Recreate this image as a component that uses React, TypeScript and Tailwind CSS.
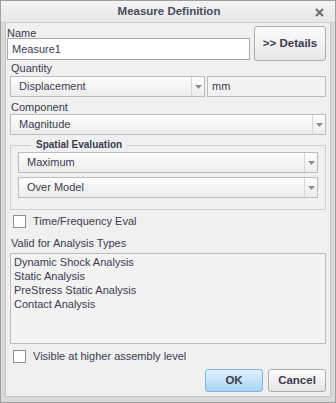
import React from 'react'

const txt = 'text-[#3b3b52]'

function Arrow() {
  return (
    <svg width="7" height="4" viewBox="0 0 7 4">
      <path d="M0 0 H7 L3.5 4 Z" fill="#8c8c8c" />
    </svg>
  )
}

function Dropdown({ value, className = '' }: { value: string; className?: string }) {
  return (
    <div
      className={`flex h-[21px] border border-[#bcbcbc] bg-linear-to-b from-[#fefefe] to-[#ececec] ${className}`}
    >
      <div className={`flex-1 flex items-center pl-[8px] text-[11px] ${txt}`}>{value}</div>
      <div className="w-[13px] border-l border-[#d6d6d6] flex items-center justify-center">
        <Arrow />
      </div>
    </div>
  )
}

function CheckRow({ label, className = '' }: { label: string; className?: string }) {
  return (
    <div className={`flex items-center ${className}`}>
      <div className="w-[13px] h-[13px] border border-[#8f8f8f] bg-white ml-[7px]" />
      <span className={`ml-[7px] text-[11px] ${txt}`}>{label}</span>
    </div>
  )
}

export default function App() {
  return (
    <div className="w-[336px] h-[403px] border border-[#9f9f9f] bg-[#d9d9d9] flex flex-col font-['Liberation_Sans',Arial,sans-serif] leading-[13px]">
      {/* title bar */}
      <div className="h-[22px] flex items-center bg-linear-to-b from-[#f5f5f5] to-[#e6e6e6] border-b border-[#cfcfcf] relative">
        <div className="flex-1 text-center text-[11.5px] font-bold text-[#4a4a5e] pl-[2px]">Measure Definition</div>
        <svg className="absolute right-[11px] top-[7px]" width="9" height="9" viewBox="0 0 9 9">
          <path d="M1 1 L8 8 M8 1 L1 8" stroke="#707070" strokeWidth="2.2" />
        </svg>
      </div>

      {/* body */}
      <div className="flex-1 mx-[4px] mb-[5px] bg-[#f0f0f0] border-l border-r border-b border-[#c4c4c4] pr-[4px]">
        {/* name row */}
        <div className="flex items-start pt-[3px]">
          <div className="flex flex-col ml-px">
            <div className={`h-[12px] text-[11px] leading-[14px] ${txt}`}>Name</div>
            <div className={`w-[243px] h-[22px] border border-[#aaaaaa] bg-white flex items-center pl-[4px] text-[11px] ${txt}`}>
              Measure1
            </div>
          </div>
          <button className="ml-[4px] w-[72px] h-[35px] rounded-[3px] border border-[#adadad] bg-linear-to-b from-[#fbfbfb] to-[#e8e8e8] text-[11.5px] font-bold text-[#3b3b52]">
            &gt;&gt; Details
          </button>
        </div>

        {/* quantity */}
        <div className={`ml-[5px] h-[13px] text-[11px] leading-[15px] ${txt}`}>Quantity</div>
        <div className="flex ml-[4px] mt-[2px]">
          <Dropdown value="Displacement" className="w-[195px]" />
          <div className={`ml-[2px] flex-1 h-[21px] border border-[#bcbcbc] bg-[#f3f3f3] flex items-center pl-[4px] text-[11px] ${txt}`}>
            mm
          </div>
        </div>

        {/* component */}
        <div className={`ml-[5px] mt-[3px] h-[13px] text-[11px] leading-[14px] ${txt}`}>Component</div>
        <Dropdown value="Magnitude" className="ml-[4px] mt-px" />

        {/* spatial evaluation */}
        <fieldset className="ml-[4px] mt-[4px] border border-[#cfcfcf] px-[7px] pb-[11px]">
          <legend className="ml-[13px] px-[5px] text-[10px] font-bold text-[#3b3b52] leading-[12px]">Spatial Evaluation</legend>
          <Dropdown value="Maximum" className="mt-px h-[20px]" />
          <Dropdown value="Over Model" className="mt-[4px] h-[20px]" />
        </fieldset>

        <CheckRow label="Time/Frequency Eval" className="mt-[5px]" />

        <div className={`ml-[5px] mt-[9px] h-[13px] text-[11px] ${txt}`}>Valid for Analysis Types</div>
        <div className={`ml-[4px] mt-[3px] h-[91px] border border-[#bcbcbc] bg-[#f3f3f3] pl-[3px] pt-px text-[11px] leading-[14px] ${txt}`}>
          <div>Dynamic Shock Analysis</div>
          <div>Static Analysis</div>
          <div>PreStress Static Analysis</div>
          <div>Contact Analysis</div>
        </div>

        <CheckRow label="Visible at higher assembly level" className="mt-[6px]" />

        <div className="flex justify-end mt-[6px] gap-[5px]">
          <button className="w-[58px] h-[23px] rounded-[3px] border border-[#7fb6e6] bg-linear-to-b from-[#e2f1fd] to-[#a9d3f4] text-[11.5px] font-bold text-[#3b3b52]">
            OK
          </button>
          <button className="w-[58px] h-[23px] rounded-[3px] border border-[#adadad] bg-linear-to-b from-[#fbfbfb] to-[#e6e6e6] text-[11.5px] font-bold text-[#3b3b52]">
            Cancel
          </button>
        </div>
      </div>
    </div>
  )
}
